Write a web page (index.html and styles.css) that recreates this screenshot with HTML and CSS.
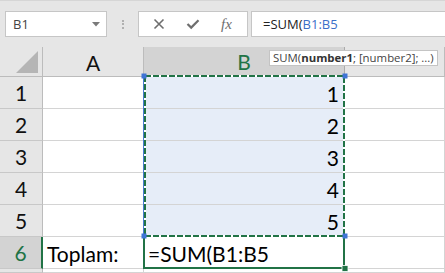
FILE: index.html
```html
<!DOCTYPE html>
<html>
<head>
<meta charset="utf-8">
<link rel="stylesheet" href="styles.css">
</head>
<body>
<div class="app">
  <div class="fbar">
    <div class="namebox">
      <span class="nb-text">B1</span>
      <svg class="nb-arrow" width="8" height="5" viewBox="0 0 8 5"><polygon points="0,0 8,0 4,4.5" fill="#7a7a7a"/></svg>
    </div>
    <div class="grip"><i></i><i></i><i></i></div>
    <div class="fxbox">
      <svg class="ic" width="12" height="12" viewBox="0 0 12 12"><path d="M1.5 1.5 L10.5 10.5 M10.5 1.5 L1.5 10.5" stroke="#6e6e6e" stroke-width="1.6" fill="none"/></svg>
      <svg class="ic" width="14" height="12" viewBox="0 0 14 12"><path d="M1.5 6 L5.2 9.6 L12.5 2.2" stroke="#6e6e6e" stroke-width="2.2" fill="none"/></svg>
      <span class="fx">fx</span>
    </div>
    <div class="finput"><span>=SUM(</span><span class="ref">B1:B5</span></div>
  </div>

  <div class="sheet">
    <div class="corner"><svg width="24" height="24" viewBox="0 0 24 24"><polygon points="23,1 23,23 1,23" fill="#b5b5b5"/></svg></div>
    <div class="ch">A</div>
    <div class="ch ch-sel">B</div>
    <div class="ch"></div>

    <div class="rh">1</div><div class="c"></div><div class="c c-b">1</div><div class="c"></div>
    <div class="rh">2</div><div class="c"></div><div class="c c-b">2</div><div class="c"></div>
    <div class="rh">3</div><div class="c"></div><div class="c c-b">3</div><div class="c"></div>
    <div class="rh">4</div><div class="c"></div><div class="c c-b">4</div><div class="c"></div>
    <div class="rh">5</div><div class="c"></div><div class="c c-b">5</div><div class="c"></div>
    <div class="rh rh-sel">6</div><div class="c c-l">Toplam:</div><div class="c c-l">=SUM(B1:B5</div><div class="c"></div>
    <div class="rh"></div><div class="c"></div><div class="c"></div><div class="c"></div>
  </div>

  <svg class="sel" width="445" height="273" viewBox="0 0 445 273">
    <rect x="144" y="236" width="200" height="32" fill="none" stroke="#217346" stroke-width="2"/>
    <line x1="143.5" y1="76" x2="143.5" y2="236" stroke="#4a7bd0" stroke-width="1"/>
    <rect x="145" y="76" width="199" height="160" fill="none" stroke="#ffffff" stroke-width="2"/>
    <rect x="145" y="76" width="199" height="160" fill="none" stroke="#217346" stroke-width="2" stroke-dasharray="6 2"/>
    <rect x="141.5" y="73.5" width="5" height="5" fill="#3f74d6"/>
    <rect x="342.5" y="73.5" width="5" height="5" fill="#3f74d6"/>
    <rect x="141.5" y="233.5" width="5" height="5" fill="#3f74d6"/>
    <rect x="342.5" y="233.5" width="5" height="5" fill="#3f74d6"/>
    <rect x="342" y="265.5" width="6" height="6" fill="#217346" stroke="#ffffff" stroke-width="0.8"/>
  </svg>

  <div class="tip">SUM(<b>number1</b>; [number2]; ...)</div>
</div>
</body>
</html>
```

FILE: styles.css
```css
* { box-sizing: border-box; }
html, body { margin: 0; padding: 0; }
body {
  width: 445px;
  height: 273px;
  overflow: hidden;
  background: #ffffff;
  font-family: "Lato", "Open Sans", sans-serif;
}
.app {
  position: relative;
  width: 445px;
  height: 273px;
  overflow: hidden;
}
.fbar {
  height: 47px;
  background: #e6e6e6;
  border-top: 1px solid #d6d6d6;
  display: flex;
  align-items: flex-start;
  padding-top: 10px;
  padding-left: 5px;
}
.namebox {
  width: 102px;
  height: 26px;
  background: #fff;
  border: 1px solid #c6c6c6;
  display: flex;
  align-items: center;
  justify-content: space-between;
  padding: 0 6px 0 7px;
}
.nb-text {
  font-family: "Open Sans", sans-serif;
  font-size: 13px;
  color: #444;
}
.nb-arrow { margin-top: 1px; }
.grip {
  width: 31px;
  height: 26px;
  display: flex;
  flex-direction: column;
  align-items: center;
  justify-content: center;
  gap: 1.5px;
}
.grip i {
  display: block;
  width: 2px;
  height: 2px;
  background: #b0b0b0;
}
.fxbox {
  width: 110px;
  height: 26px;
  background: #fff;
  border: 1px solid #c6c6c6;
  display: flex;
  align-items: center;
  padding-left: 14px;
  gap: 21px;
}
.fx {
  font-family: "Liberation Serif", serif;
  font-style: italic;
  font-size: 15px;
  color: #6e6e6e;
}
.finput {
  flex: 1;
  margin-left: 3px;
  height: 26px;
  background: #fff;
  border: 1px solid #c6c6c6;
  border-right: none;
  display: flex;
  align-items: center;
  padding-left: 11px;
  font-family: "Open Sans", sans-serif;
  font-size: 13px;
  color: #222;
}
.finput .ref { color: #3b6fc9; }

.sheet {
  display: grid;
  grid-template-columns: 43px 101px 201px 1fr;
  grid-template-rows: 30px repeat(6, 32px) 1fr;
  height: 226px;
  font-size: 21px;
}
.corner {
  background: #e6e6e6;
  border-right: 1px solid #bcbcbc;
  border-bottom: 1px solid #bcbcbc;
  display: flex;
  align-items: flex-end;
  justify-content: flex-end;
  padding: 0 3px 2px 0;
}
.corner svg { display: block; }
.ch {
  background: #e6e6e6;
  border-right: 1px solid #bcbcbc;
  border-bottom: 1px solid #bcbcbc;
  display: flex;
  align-items: center;
  justify-content: center;
  color: #111;
  padding-top: 1px;
}
.ch-sel {
  background: #d3d3d3;
  color: #217346;
  border-bottom: 2px solid #217346;
  border-right-color: #ababab;
}
.rh {
  background: #e6e6e6;
  border-right: 1px solid #bcbcbc;
  border-bottom: 1px solid #c8c8c8;
  display: flex;
  align-items: center;
  justify-content: center;
  color: #111;
}
.rh-sel {
  background: #d3d3d3;
  color: #217346;
  border-right: 2px solid #217346;
}
.c {
  background: #fff;
  border-right: 1px solid #d4d4d4;
  border-bottom: 1px solid #d4d4d4;
  display: flex;
  align-items: center;
  color: #000;
}
.c-b {
  background: #e6edf8;
  justify-content: flex-end;
  padding-right: 5px;
  padding-top: 2px;
}
.c-l {
  padding-left: 4px;
  padding-top: 2px;
}
.sel {
  position: absolute;
  left: 0;
  top: 0;
  pointer-events: none;
}
.tip {
  position: absolute;
  left: 269px;
  top: 50px;
  height: 16px;
  background: #fff;
  border: 1px solid #c4c4c4;
  font-family: "Open Sans", sans-serif;
  font-size: 11.4px;
  line-height: 14px;
  color: #444;
  padding: 0 3px 0 3px;
  white-space: nowrap;
}
.tip b { font-weight: 700; color: #333; }
```
